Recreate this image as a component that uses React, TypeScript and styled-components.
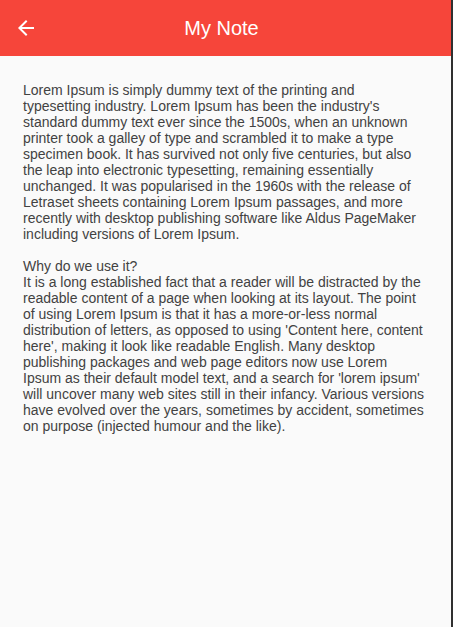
import React from "react";
import styled, { createGlobalStyle } from "styled-components";

const Global = createGlobalStyle`
  html, body { margin: 0; padding: 0; background: #fafafa; }
  body { font-family: "Liberation Sans", Arial, sans-serif; }
`;

const Screen = styled.div`
  width: 451px;
  height: 627px;
  border-right: 2px solid #303030;
  background: #fafafa;
  display: flex;
  flex-direction: column;
`;

const AppBar = styled.header`
  height: 56px;
  background: #f6453a;
  display: flex;
  align-items: center;
  flex-shrink: 0;
`;

const BackButton = styled.button`
  width: 24px;
  height: 24px;
  margin-left: 14px;
  padding: 0;
  border: 0;
  background: transparent;
  display: flex;
  align-items: center;
  justify-content: center;
  color: #fff;
  cursor: pointer;
`;

const Title = styled.h1`
  margin: 0;
  flex: 1;
  text-align: center;
  padding-right: 46px;
  color: #fff;
  font-size: 20px;
  font-weight: 400;
  font-family: "Liberation Sans", Arial, sans-serif;
`;

const Body = styled.main`
  padding: 26px 23px 0 23px;
`;

const Paragraph = styled.p`
  margin: 0 0 16px 0;
  font-size: 14px;
  line-height: 16px;
  color: #424242;
  white-space: pre-line;
`;

const first = [
  "Lorem Ipsum is simply dummy text of the printing and",
  "typesetting industry. Lorem Ipsum has been the industry's",
  "standard dummy text ever since the 1500s, when an unknown",
  "printer took a galley of type and scrambled it to make a type",
  "specimen book. It has survived not only five centuries, but also",
  "the leap into electronic typesetting, remaining essentially",
  "unchanged. It was popularised in the 1960s with the release of",
  "Letraset sheets containing Lorem Ipsum passages, and more",
  "recently with desktop publishing software like Aldus PageMaker",
  "including versions of Lorem Ipsum.",
].join("\n");

const second =
  "Why do we use it?\nIt is a long established fact that a reader will be distracted by the readable content of a page when looking at its layout. The point of using Lorem Ipsum is that it has a more-or-less normal distribution of letters, as opposed to using 'Content here, content here', making it look like readable English. Many desktop publishing packages and web page editors now use Lorem Ipsum as their default model text, and a search for 'lorem ipsum' will uncover many web sites still in their infancy. Various versions have evolved over the years, sometimes by accident, sometimes on purpose (injected humour and the like).";

export default function App() {
  return (
    <>
      <Global />
      <Screen>
        <AppBar>
          <BackButton aria-label="Back">
            <svg width="24" height="24" viewBox="0 0 24 24" fill="currentColor">
              <path d="M20 11H7.83l5.59-5.59L12 4l-8 8 8 8 1.41-1.41L7.83 13H20v-2z" />
            </svg>
          </BackButton>
          <Title>My Note</Title>
        </AppBar>
        <Body>
          <Paragraph>{first}</Paragraph>
          <Paragraph>{second}</Paragraph>
        </Body>
      </Screen>
    </>
  );
}
